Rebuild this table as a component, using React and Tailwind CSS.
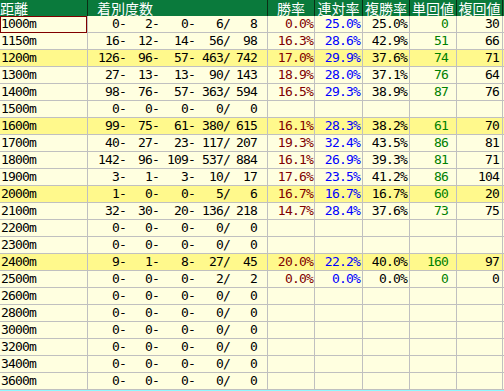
import React from "react";

const rows = [
  ["1000m", ["0-", "2-", "0-", "6/", "8"], "0.0%", "25.0%", "25.0%", "0", "30", false],
  ["1150m", ["16-", "12-", "14-", "56/", "98"], "16.3%", "28.6%", "42.9%", "51", "66", false],
  ["1200m", ["126-", "96-", "57-", "463/", "742"], "17.0%", "29.9%", "37.6%", "74", "71", true],
  ["1300m", ["27-", "13-", "13-", "90/", "143"], "18.9%", "28.0%", "37.1%", "76", "64", false],
  ["1400m", ["98-", "76-", "57-", "363/", "594"], "16.5%", "29.3%", "38.9%", "87", "76", false],
  ["1500m", ["0-", "0-", "0-", "0/", "0"], "", "", "", "", "", false],
  ["1600m", ["99-", "75-", "61-", "380/", "615"], "16.1%", "28.3%", "38.2%", "61", "70", true],
  ["1700m", ["40-", "27-", "23-", "117/", "207"], "19.3%", "32.4%", "43.5%", "86", "81", false],
  ["1800m", ["142-", "96-", "109-", "537/", "884"], "16.1%", "26.9%", "39.3%", "81", "71", false],
  ["1900m", ["3-", "1-", "3-", "10/", "17"], "17.6%", "23.5%", "41.2%", "86", "104", false],
  ["2000m", ["1-", "0-", "0-", "5/", "6"], "16.7%", "16.7%", "16.7%", "60", "20", true],
  ["2100m", ["32-", "30-", "20-", "136/", "218"], "14.7%", "28.4%", "37.6%", "73", "75", false],
  ["2200m", ["0-", "0-", "0-", "0/", "0"], "", "", "", "", "", false],
  ["2300m", ["0-", "0-", "0-", "0/", "0"], "", "", "", "", "", false],
  ["2400m", ["9-", "1-", "8-", "27/", "45"], "20.0%", "22.2%", "40.0%", "160", "97", true],
  ["2500m", ["0-", "0-", "0-", "2/", "2"], "0.0%", "0.0%", "0.0%", "0", "0", false],
  ["2600m", ["0-", "0-", "0-", "0/", "0"], "", "", "", "", "", false],
  ["2800m", ["0-", "0-", "0-", "0/", "0"], "", "", "", "", "", false],
  ["3000m", ["0-", "0-", "0-", "0/", "0"], "", "", "", "", "", false],
  ["3200m", ["0-", "0-", "0-", "0/", "0"], "", "", "", "", "", false],
  ["3400m", ["0-", "0-", "0-", "0/", "0"], "", "", "", "", "", false],
  ["3600m", ["0-", "0-", "0-", "0/", "0"], "", "", "", "", "", false],
];

const mono = "font-['DejaVu_Sans_Mono','Liberation_Mono',monospace] text-[13px] tracking-[-0.8px] leading-[16px] whitespace-pre";

export default function App() {
  return (
    <div className="w-[504px] h-[391px] bg-[#ffffe0] overflow-hidden">
      <div className="flex h-[16px] bg-[#0a7a3c] text-white font-['Noto_Sans_CJK_JP',sans-serif] text-[14px] leading-[16px] whitespace-nowrap">
        <div className="w-[88px] border-r border-[#0b2e14]">距離</div>
        <div className="w-[180px] border-r border-[#0b2e14] pl-[9px]">着別度数</div>
        <div className="w-[47px] border-r border-[#0b2e14] text-center">勝率</div>
        <div className="w-[48px] border-r border-[#0b2e14] text-center">連対率</div>
        <div className="w-[47px] border-r border-[#0b2e14] text-center">複勝率</div>
        <div className="w-[47px] border-r border-[#0b2e14] text-center">単回値</div>
        <div className="w-[46px] border-r border-[#0b2e14] text-center">複回値</div>
      </div>
      {rows.map((r, i) => (
        <div
          key={r[0]}
          className={`relative flex h-[17px] border-b border-[#c0c0c0] text-black ${mono} ${r[7] ? "bg-[#fff98c]" : "bg-[#ffffe0]"}`}
        >
          <div className="w-[88px] border-r border-[#c0c0c0] pl-[1px]">{r[0]}</div>
          <div className="w-[180px] border-r border-[#c0c0c0] flex">
            <span className="w-[38px] text-right">{r[1][0]}</span>
            <span className="w-[33px] text-right">{r[1][1]}</span>
            <span className="w-[36px] text-right">{r[1][2]}</span>
            <span className="w-[35px] text-right">{r[1][3]}</span>
            <span className="w-[27px] text-right">{r[1][4]}</span>
          </div>
          <div className="w-[47px] border-r border-[#c0c0c0] text-right pr-[1px] text-[#800000]">{r[2]}</div>
          <div className="w-[48px] border-r border-[#c0c0c0] text-right pr-[2px] text-[#0000ff]">{r[3]}</div>
          <div className="w-[47px] border-r border-[#c0c0c0] text-right pr-[2px]">{r[4]}</div>
          <div className="w-[47px] border-r border-[#c0c0c0] text-right pr-[8px] text-[#008000]">{r[5]}</div>
          <div className="w-[46px] border-r border-[#c0c0c0] text-right pr-[3px]">{r[6]}</div>
          {i === 0 && (
            <div className="absolute left-0 top-0 w-[87px] h-[17px] border border-[#800000]" />
          )}
        </div>
      ))}
      <div className="h-[1px] bg-[#8ff8ff]" />
    </div>
  );
}
